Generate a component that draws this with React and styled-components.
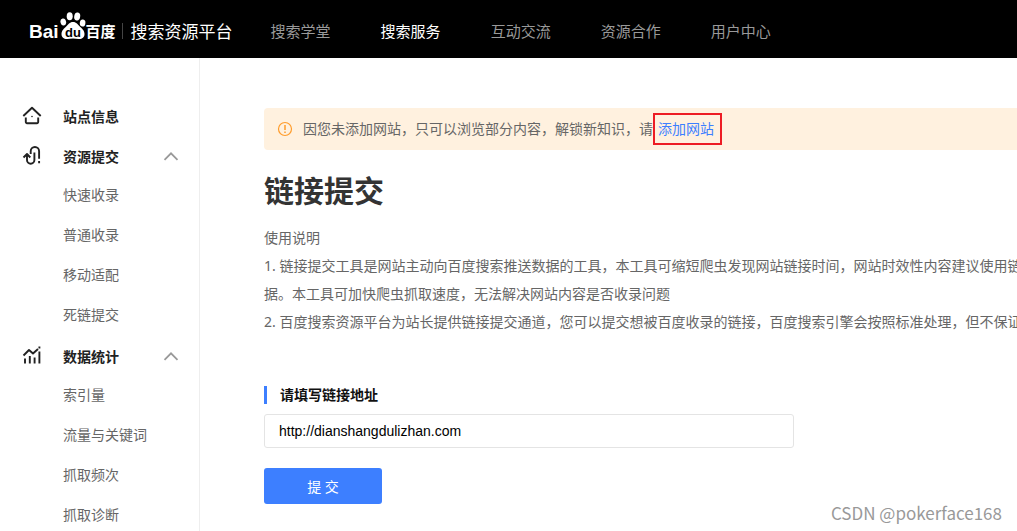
import styled, { createGlobalStyle } from 'styled-components';

const NAV = ['搜索学堂', '搜索服务', '互动交流', '资源合作', '用户中心'];

const MENU = [
  { title: '站点信息', icon: 'home' },
  {
    title: '资源提交',
    icon: 'submit',
    children: ['快速收录', '普通收录', '移动适配', '死链提交'],
  },
  {
    title: '数据统计',
    icon: 'chart',
    children: ['索引量', '流量与关键词', '抓取频次', '抓取诊断'],
  },
];

export default function App() {
  return (
    <>
      <GlobalStyle />
      <Page>
        <Header />
        <Body>
          <SideMenu />
          <LinkSubmit />
        </Body>
        <Watermark>CSDN @pokerface168</Watermark>
      </Page>
    </>
  );
}

function Header() {
  return (
    <HeaderWrap>
      <Logo href='#'>
        <LogoLatin>Bai</LogoLatin>
        <PawLogo />
        <LogoHan>百度</LogoHan>
        <LogoDivider />
        <LogoTitle>搜索资源平台</LogoTitle>
      </Logo>
      <Nav>
        {NAV.map((name) => (
          <NavLink key={name} href='#' $active={name === '搜索服务'}>
            {name}
          </NavLink>
        ))}
      </Nav>
    </HeaderWrap>
  );
}

function SideMenu() {
  return (
    <Side>
      {MENU.map(({ title, icon, children }) => (
        <div key={title}>
          <MenuButton type='button'>
            <MenuIcon type={icon} />
            <MenuTitle>{title}</MenuTitle>
            {children && <ArrowUp />}
          </MenuButton>
          {children && (
            <SubList>
              {children.map((name) => (
                <li key={name}>
                  <SubLink href='#'>{name}</SubLink>
                </li>
              ))}
            </SubList>
          )}
        </div>
      ))}
    </Side>
  );
}

function LinkSubmit() {
  return (
    <Main>
      <Notice>
        <NoticeIcon />
        <NoticeText>因您未添加网站，只可以浏览部分内容，解锁新知识，请</NoticeText>
        <AddSite href='#'>添加网站</AddSite>
      </Notice>
      <Title>链接提交</Title>
      <Guide>
        使用说明
        <br />
        1. 链接提交工具是网站主动向百度搜索推送数据的工具，本工具可缩短爬虫发现网站链接时间，网站时效性内容建议使用链
        <br />
        据。本工具可加快爬虫抓取速度，无法解决网站内容是否收录问题
        <br />
        2. 百度搜索资源平台为站长提供链接提交通道，您可以提交想被百度收录的链接，百度搜索引擎会按照标准处理，但不保证
      </Guide>
      <Form>
        <Label htmlFor='url'>请填写链接地址</Label>
        <UrlInput id='url' type='text' defaultValue='http://dianshangdulizhan.com' />
        <SubmitButton type='button'>提 交</SubmitButton>
      </Form>
    </Main>
  );
}

function PawLogo() {
  return (
    <svg width='26' height='28' viewBox='0 0 26 28' fill='#fff'>
      <ellipse cx='9.7' cy='4.300' rx='3' ry='4' />
      <ellipse cx='17.2' cy='4.500' rx='3' ry='4' transform='rotate(10 17.2 4.500)' />
      <ellipse cx='3.300' cy='10' rx='2.800' ry='3.600' transform='rotate(-12 3.300 10)' />
      <ellipse cx='22.600' cy='11' rx='2.800' ry='3.600' transform='rotate(8 22.600 11)' />
      <path d='M13 10c-3.500 0-4.800 2.500-6.800 4.500S1.500 18.500 1.500 22s2.800 5.300 5.800 5c2-.2 3.700-.5 5.700-.5s3.700.3 5.700.5c3 .3 5.800-1.500 5.800-5s-2.700-5.500-4.700-7.500S16.500 10 13 10z' />
      <text
        x='13'
        y='24.500'
        fill='#000'
        fontFamily='Liberation Sans, sans-serif'
        fontSize='13'
        fontWeight='700'
        textAnchor='middle'
      >
        du
      </text>
    </svg>
  );
}

function MenuIcon({ type }) {
  return (
    <svg
      width='20'
      height='20'
      viewBox='0 0 20 20'
      fill='none'
      stroke='#222'
      strokeWidth='1.900'
      strokeLinejoin='round'
    >
      {type === 'home' && (
        <>
          <path d='M1.300 10L10 1.800 18.700 10' />
          <path d='M3.800 11.500V16a1.200 1.200 0 0 0 1.200 1.200h10a1.200 1.200 0 0 0 1.200-1.200v-4.500' />
          <circle cx='10' cy='10.500' r='.8' fill='#222' stroke='none' />
        </>
      )}
      {type === 'submit' && (
        <>
          <path d='M1.500 11.500L5 8l3.300 3.500M5 8.500v5.500a3.700 3.700 0 0 0 7.400 0V6.500' />
          <path d='M8.700 8V5.200a4.200 4.200 0 0 1 8.400 0v7.600M17.100 15v2.200' />
        </>
      )}
      {type === 'chart' && (
        <>
          <path d='M1.500 9.500L7 4l4 3.500L16 3' />
          <path d='M3 12.500v5M7.800 10v7.500M12.600 11.500v6M17.400 5.500v12M17.400 .5v2' />
        </>
      )}
    </svg>
  );
}

function ArrowUp() {
  return (
    <svg width='16' height='10' viewBox='0 0 16 10' fill='none' stroke='#999' strokeWidth='1.800'>
      <path d='M1.500 8.800L8 2.300l6.500 6.500' />
    </svg>
  );
}

function NoticeIcon() {
  return (
    <svg width='16' height='16' viewBox='0 0 16 16' fill='none' stroke='#ff9c2b' strokeWidth='1.200'>
      <circle cx='8' cy='8' r='6.500' />
      <path d='M8 4v5M8 10.500v1.500' strokeWidth='1.500' />
    </svg>
  );
}

const GlobalStyle = createGlobalStyle`
  * {
    box-sizing: border-box;
  }

  body {
    margin: 0;
    background-color: #fff;
    font-family: 'Noto Sans', 'Noto Sans CJK SC', sans-serif;
    font-size: 14px;
    color: #666;
  }

  a {
    color: inherit;
    text-decoration: none;
  }
`;

const Page = styled.div`
  display: flex;
  flex-direction: column;
  position: relative;
  height: 100vh;
  overflow: hidden;
`;

const HeaderWrap = styled.header`
  display: flex;
  flex-shrink: 0;
  align-items: center;
  gap: 38px;
  height: 58px;
  padding: 0 29px;
  background-color: #000;
`;

const Logo = styled.a`
  display: flex;
  align-items: center;
  color: #fff;
  white-space: nowrap;

  svg {
    margin: 0 0 6px 1px;
  }
`;

const LogoLatin = styled.span`
  padding-top: 5px;
  font-family: 'Liberation Sans', sans-serif;
  font-size: 19px;
  font-weight: 700;
`;

const LogoHan = styled.span`
  padding-top: 2px;
  font-size: 15px;
  font-weight: 700;
`;

const LogoDivider = styled.span`
  width: 1px;
  height: 16px;
  margin: 4px 8px 0 6px;
  background-color: #444;
`;

const LogoTitle = styled.span`
  padding-top: 2px;
  font-size: 17px;
`;

const Nav = styled.nav`
  display: flex;
  gap: 50px;
  padding-top: 2px;
`;

const NavLink = styled.a`
  font-size: 15px;
  white-space: nowrap;
  color: ${({ $active }) => ($active ? '#fff' : '#999')};
`;

const Body = styled.div`
  display: flex;
  flex: 1;
  min-height: 0;
`;

const Side = styled.aside`
  flex: 0 0 200px;
  padding-top: 39px;
  border-right: 1px solid #eee;
  overflow: hidden;
`;

const MenuButton = styled.button`
  display: flex;
  align-items: center;
  gap: 21px;
  width: 100%;
  height: 40px;
  padding: 0 20px 2px 22px;
  border: none;
  background: none;
  color: #222;
  font: inherit;
  font-weight: 700;
  text-align: left;
  cursor: pointer;
`;

const MenuTitle = styled.span`
  flex: 1;
`;

const SubList = styled.ul`
  margin: 0;
  padding: 0;
  list-style: none;
`;

const SubLink = styled.a`
  display: block;
  height: 40px;
  padding-left: 63px;
  line-height: 36px;
`;

const Main = styled.main`
  flex: 1;
  min-width: 0;
  padding: 50px 0 0 64px;
  overflow: hidden;
`;

const Notice = styled.div`
  display: flex;
  align-items: center;
  height: 42px;
  padding-left: 13px;
  border-radius: 4px 0 0 4px;
  background-color: #fff1df;
  white-space: nowrap;

  svg {
    margin-right: 10px;
  }
`;

const NoticeText = styled.span`
  line-height: 28px;
`;

const AddSite = styled.a`
  height: 32px;
  padding: 0 6px 0 3px;
  border: 2px solid #ed1c24;
  line-height: 28px;
  color: #3d7fff;
`;

const Title = styled.h1`
  margin: 20px 0 12px;
  font-size: 30px;
  line-height: 42px;
  color: #333;
`;

const Guide = styled.p`
  margin: 0;
  line-height: 28px;
  white-space: nowrap;
`;

const Form = styled.form`
  display: flex;
  flex-direction: column;
  align-items: flex-start;
  margin-top: 50px;
`;

const Label = styled.label`
  padding-left: 13px;
  border-left: 3px solid #3d7fff;
  line-height: 18px;
  font-weight: 700;
  color: #111;
`;

const UrlInput = styled.input`
  width: 100%;
  max-width: 530px;
  height: 34px;
  margin: 10px 0 20px;
  padding: 0 14px;
  border: 1px solid #e4e4e4;
  border-radius: 3px;
  font-family: 'Liberation Sans', sans-serif;
  font-size: 14px;
  color: #000;
`;

const SubmitButton = styled.button`
  width: 118px;
  height: 36px;
  border: none;
  border-radius: 3px;
  background-color: #3d7fff;
  color: #fff;
  font: inherit;
  cursor: pointer;
`;

const Watermark = styled.div`
  position: absolute;
  right: 15px;
  bottom: 6px;
  font-family: 'Noto Sans CJK SC', sans-serif;
  font-size: 17px;
  line-height: 24px;
  color: #999;
`;
